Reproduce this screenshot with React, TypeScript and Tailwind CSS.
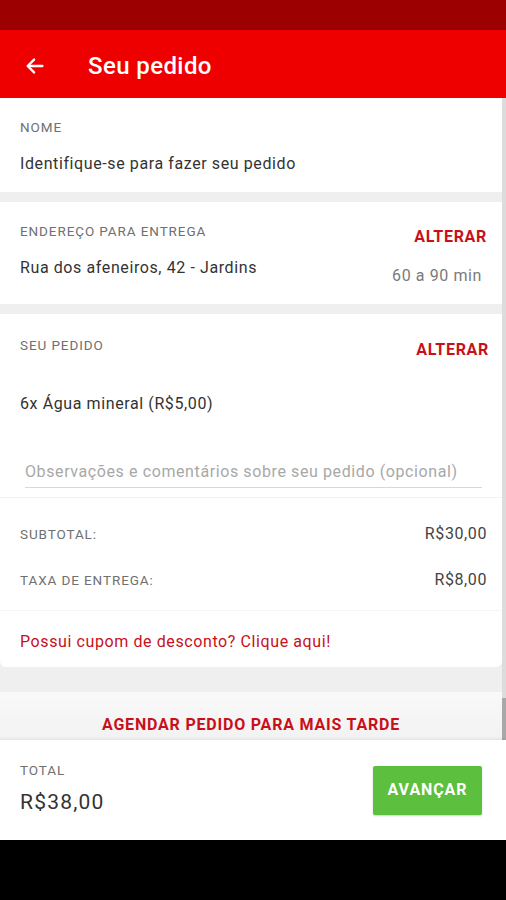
import React from 'react';

const font = { fontFamily: 'Roboto, "Liberation Sans", sans-serif' };

function Label({ children }: { children: React.ReactNode }) {
  return <p className="text-[13.5px] leading-4 text-[#707070] uppercase tracking-[0.9px]">{children}</p>;
}

function Alterar() {
  return <button className="text-[16px] leading-5 font-bold text-[#c8101a] tracking-[0.7px]">ALTERAR</button>;
}

export default function App() {
  return (
    <div style={font} className="w-[506px] h-[900px] flex flex-col bg-black overflow-hidden">
      <div className="h-[30px] bg-[#9c0000] shrink-0" />
      <header className="h-[68px] bg-[#ee0000] flex items-center shrink-0 pt-[3px]">
        <svg className="ml-[24px]" width="22" height="22" viewBox="0 0 24 24" fill="none" stroke="white" strokeWidth="2.6" strokeLinecap="round" strokeLinejoin="round">
          <path d="M20 12H4.5" />
          <path d="M11 5l-7 7 7 7" />
        </svg>
        <h1 className="ml-[42px] text-white text-[24px] font-medium tracking-[0.4px]">Seu pedido</h1>
      </header>

      <div className="flex flex-1 min-h-0 bg-[#efefef] text-[16px] tracking-[0.6px]">
        <div className="flex-1 flex flex-col">
          <section className="bg-white h-[94px] px-[20px] pt-[21px]">
            <Label>Nome</Label>
            <p className="mt-[17px] text-[#333]">Identifique-se para fazer seu pedido</p>
          </section>

          <section className="bg-white mt-[10px] h-[102px] pl-[20px] pr-[15px] pt-[21px] flex justify-between">
            <div>
              <Label>Endereço para entrega</Label>
              <p className="mt-[17px] text-[#333]">Rua dos afeneiros, 42 - Jardins</p>
            </div>
            <div className="flex flex-col items-end pt-[4px]">
              <Alterar />
              <p className="mt-[17px] mr-[5px] text-[#7a7a7a]">60 a 90 min</p>
            </div>
          </section>

          <section className="bg-white mt-[10px] rounded-b-[6px] flex flex-col">
            <div className="h-[183px] pl-[20px] pr-[13px] pt-[23px]">
              <div className="flex justify-between items-start">
                <Label>Seu pedido</Label>
                <div className="pt-[1px]"><Alterar /></div>
              </div>
              <p className="mt-[30px] text-[#333]">6x Água mineral (R$5,00)</p>
              <div className="mt-[44px] ml-[5px] mr-[7px] border-b border-[#d8d8d8] pb-[3px]">
                <p className="text-[#a8a8a8]">Observações e comentários sobre seu pedido (opcional)</p>
              </div>
            </div>
            <div className="border-t border-[#f3f3f3] h-[113px] pl-[20px] pr-[15px] pt-[24px] flex flex-col gap-[22px]">
              <div className="flex justify-between items-center">
                <Label>Subtotal:</Label>
                <span className="text-[#444]">R$30,00</span>
              </div>
              <div className="flex justify-between items-center">
                <Label>Taxa de entrega:</Label>
                <span className="text-[#444]">R$8,00</span>
              </div>
            </div>
            <div className="border-t border-[#f5f5f5] h-[57px] px-[20px] pt-[5px] flex items-center">
              <p className="text-[#c8101a]">Possui cupom de desconto? Clique aqui!</p>
            </div>
          </section>

          <div className="mt-[25px] flex-1 bg-gradient-to-b from-[#f9f9f9] to-[#f2f2f2] flex items-center justify-center pt-[17px]">
            <span className="font-bold text-[#c8101a] tracking-[0.8px]">AGENDAR PEDIDO PARA MAIS TARDE</span>
          </div>
        </div>
        <div className="w-[4px] bg-[#dcdcdc] flex flex-col justify-end">
          <div className="h-[42px] bg-[#a8a8a8]" />
        </div>
      </div>

      <footer className="h-[100px] bg-white shrink-0 flex items-center justify-between pl-[20px] pr-[24px] shadow-[0_-1px_3px_rgba(0,0,0,0.08)]">
        <div>
          <Label>Total</Label>
          <p className="mt-[9px] text-[21px] text-[#333] tracking-[1.2px]">R$38,00</p>
        </div>
        <button className="w-[109px] h-[49px] bg-[#5cbf3e] rounded-[2px] text-white font-bold text-[16px] tracking-[0.9px] shadow-[0_1px_2px_rgba(0,0,0,0.2)]">
          AVANÇAR
        </button>
      </footer>
      <div className="h-[60px] bg-black shrink-0" />
    </div>
  );
}
